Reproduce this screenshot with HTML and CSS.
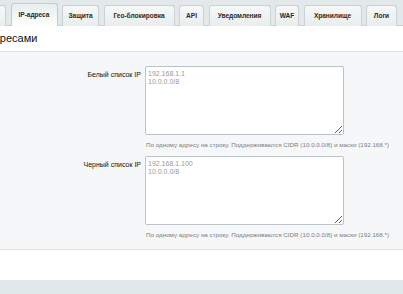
FILE: index.html
```html
<!DOCTYPE html>
<html lang="ru">
<head>
<meta charset="utf-8">
<title>IP-адреса</title>
<link rel="stylesheet" href="styles.css">
</head>
<body>
<div class="page">
  <div class="tabs">
    <div class="tab tab-first">Основное</div>
    <div class="tab active t-ip">IP-адреса</div>
    <div class="tab t-sec">Защита</div>
    <div class="tab t-geo">Гео-блокировка</div>
    <div class="tab t-api">API</div>
    <div class="tab t-notify">Уведомления</div>
    <div class="tab t-waf">WAF</div>
    <div class="tab t-store">Хранилище</div>
    <div class="tab t-logs">Логи</div>
  </div>
  <div class="heading"><span class="heading-text">Управление IP-адресами</span></div>
  <div class="form">
    <div class="row">
      <label class="label">Белый список IP</label>
      <div class="field">
        <textarea class="area">192.168.1.1
10.0.0.0/8</textarea>
        <div class="hint">По одному адресу на строку. Поддерживаются CIDR (10.0.0.0/8) и маски (192.168.*)</div>
      </div>
    </div>
    <div class="row">
      <label class="label">Черный список IP</label>
      <div class="field">
        <textarea class="area">192.168.1.100
10.0.0.0/8</textarea>
        <div class="hint">По одному адресу на строку. Поддерживаются CIDR (10.0.0.0/8) и маски (192.168.*)</div>
      </div>
    </div>
  </div>
  <div class="spacer"></div>
  <div class="footer"></div>
</div>
</body>
</html>
```

FILE: styles.css
```css
html, body {
  margin: 0;
  padding: 0;
  background: #ffffff;
  overflow: hidden;
}
.page {
  width: 403px;
  height: 294px;
  font-family: "Liberation Sans", Arial, sans-serif;
  color: #000;
  overflow: hidden;
}
.tabs {
  height: 26px;
  background: #e3e8ea;
  border-bottom: 1px solid #c9d1d4;
  display: flex;
  align-items: flex-end;
  gap: 4.5px;
  box-sizing: border-box;
  white-space: nowrap;
}
.tab {
  flex: none;
  height: 21px;
  line-height: 20px;
  padding: 0;
  text-align: center;
  overflow: hidden;
  box-sizing: border-box;
  font-size: 6.6px;
  font-weight: bold;
  letter-spacing: -0.05px;
  color: #2b2b2b;
  background: linear-gradient(#f6f8f8, #e9edee);
  border: 1px solid #cbd2d5;
  border-bottom: none;
  border-radius: 3px 3px 0 0;
  margin-bottom: -1px;
}
.tab-first {
  margin-left: -41px;
  width: 47px;
  text-align: left;
  padding-left: 0;
  text-indent: -4px;
}
.active {
  height: 23px;
  line-height: 22px;
  background: linear-gradient(#e9eded, #fdfefe);
  border-color: #c3cbce;
}
.t-ip { width: 47px; }
.t-sec { width: 37px; }
.t-geo { width: 71px; }
.t-api { width: 25px; }
.t-notify { width: 62px; }
.t-waf { width: 24px; }
.t-store { width: 58px; }
.t-logs { width: 31px; }
.heading {
  height: 26px;
  line-height: 24px;
  font-size: 11px;
  white-space: nowrap;
  color: #111;
  border-bottom: 1px solid #dde3e5;
  box-sizing: border-box;
  overflow: hidden;
}
.heading-text {
  display: inline-block;
  margin-left: -91px;
}
.form {
  background: #f5f7f8;
  border-bottom: 1px solid #dce3e5;
  padding: 14px 0 8px;
  display: flex;
  flex-direction: column;
  gap: 8px;
  height: 198px;
  box-sizing: border-box;
}
.row {
  display: flex;
  gap: 4px;
}
.label {
  width: 141px;
  text-align: right;
  font-size: 7px;
  padding-top: 5px;
  color: #111;
  box-sizing: border-box;
}
.field {
  display: flex;
  flex-direction: column;
}
.area {
  width: 199px;
  height: 69px;
  box-sizing: border-box;
  margin: 0;
  padding: 3px 2px;
  border: 1px solid #bcc3c6;
  border-radius: 2px;
  background: #fff;
  font-family: "Liberation Sans", Arial, sans-serif;
  font-size: 7px;
  line-height: 8px;
  color: #999999;
  resize: vertical;
}
.hint {
  font-size: 6.25px;
  color: #7d7d7d;
  margin-top: 6px;
  margin-left: 1px;
  white-space: nowrap;
}
.spacer {
  height: 30px;
  background: #fff;
}
.footer {
  height: 20px;
  background: #e1e8ea;
}
```
